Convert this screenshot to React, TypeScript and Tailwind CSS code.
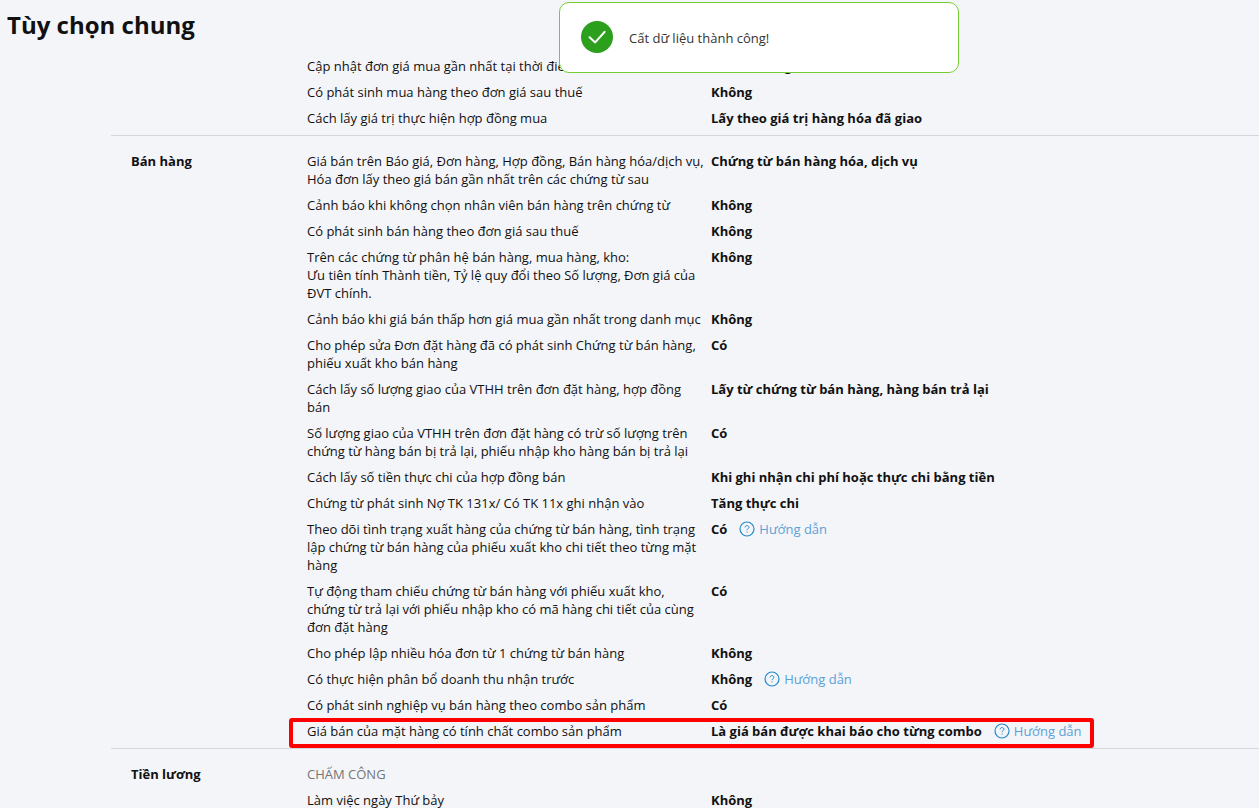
import type { ReactNode } from 'react';
import clsx from 'clsx';

interface Option {
  label: ReactNode;
  value: string;
  help?: boolean;
  highlighted?: boolean;
}

interface OptionSection {
  title?: string;
  subtitle?: string;
  options: Option[];
}

const sections: OptionSection[] = [
  {
    options: [
      { label: 'Cập nhật đơn giá mua gần nhất tại thời điểm', value: 'Thêm chứng từ' },
      { label: 'Có phát sinh mua hàng theo đơn giá sau thuế', value: 'Không' },
      { label: 'Cách lấy giá trị thực hiện hợp đồng mua', value: 'Lấy theo giá trị hàng hóa đã giao' },
    ],
  },
  {
    title: 'Bán hàng',
    options: [
      {
        label:
          'Giá bán trên Báo giá, Đơn hàng, Hợp đồng, Bán hàng hóa/dịch vụ, Hóa đơn lấy theo giá bán gần nhất trên các chứng từ sau',
        value: 'Chứng từ bán hàng hóa, dịch vụ',
      },
      { label: 'Cảnh báo khi không chọn nhân viên bán hàng trên chứng từ', value: 'Không' },
      { label: 'Có phát sinh bán hàng theo đơn giá sau thuế', value: 'Không' },
      {
        label: (
          <>
            Trên các chứng từ phân hệ bán hàng, mua hàng, kho:
            <br />
            Ưu tiên tính Thành tiền, Tỷ lệ quy đổi theo Số lượng, Đơn giá của ĐVT chính.
          </>
        ),
        value: 'Không',
      },
      { label: 'Cảnh báo khi giá bán thấp hơn giá mua gần nhất trong danh mục', value: 'Không' },
      {
        label: 'Cho phép sửa Đơn đặt hàng đã có phát sinh Chứng từ bán hàng, phiếu xuất kho bán hàng',
        value: 'Có',
      },
      {
        label: 'Cách lấy số lượng giao của VTHH trên đơn đặt hàng, hợp đồng bán',
        value: 'Lấy từ chứng từ bán hàng, hàng bán trả lại',
      },
      {
        label:
          'Số lượng giao của VTHH trên đơn đặt hàng có trừ số lượng trên chứng từ hàng bán bị trả lại, phiếu nhập kho hàng bán bị trả lại',
        value: 'Có',
      },
      {
        label: 'Cách lấy số tiền thực chi của hợp đồng bán',
        value: 'Khi ghi nhận chi phí hoặc thực chi bằng tiền',
      },
      { label: 'Chứng từ phát sinh Nợ TK 131x/ Có TK 11x ghi nhận vào', value: 'Tăng thực chi' },
      {
        label:
          'Theo dõi tình trạng xuất hàng của chứng từ bán hàng, tình trạng lập chứng từ bán hàng của phiếu xuất kho chi tiết theo từng mặt hàng',
        value: 'Có',
        help: true,
      },
      {
        label:
          'Tự động tham chiếu chứng từ bán hàng với phiếu xuất kho, chứng từ trả lại với phiếu nhập kho có mã hàng chi tiết của cùng đơn đặt hàng',
        value: 'Có',
      },
      { label: 'Cho phép lập nhiều hóa đơn từ 1 chứng từ bán hàng', value: 'Không' },
      { label: 'Có thực hiện phân bổ doanh thu nhận trước', value: 'Không', help: true },
      { label: 'Có phát sinh nghiệp vụ bán hàng theo combo sản phẩm', value: 'Có' },
      {
        label: 'Giá bán của mặt hàng có tính chất combo sản phẩm',
        value: 'Là giá bán được khai báo cho từng combo',
        help: true,
        highlighted: true,
      },
    ],
  },
  {
    title: 'Tiền lương',
    subtitle: 'CHẤM CÔNG',
    options: [{ label: 'Làm việc ngày Thứ bảy', value: 'Không' }],
  },
];

function HelpLink() {
  return (
    <a href="#huong-dan" className="flex items-center gap-1 text-[#5ba1d6]">
      <svg viewBox="0 0 16 16" className="size-4 text-[#2389cc]" fill="none" stroke="currentColor" aria-hidden="true">
        <circle cx="8" cy="8" r="7" strokeWidth="1.2" />
        <path d="M6.1 6.4c0-1.1.8-1.8 1.9-1.8s1.9.7 1.9 1.7c0 1.3-1.8 1.5-1.8 2.9" strokeWidth="1" />
        <path d="M8.1 10.4v1.1" strokeWidth="1.1" />
      </svg>
      Hướng dẫn
    </a>
  );
}

function OptionRow({ option }: { option: Option }) {
  return (
    <div className={clsx('flex gap-1.5', option.highlighted && 'relative w-fit')}>
      <dt className="w-[398px] shrink-0">{option.label}</dt>
      <dd className="flex items-start gap-3">
        <span className="font-bold">{option.value}</span>
        {option.help && <HelpLink />}
      </dd>
      {/* Highlight frame */}
      {option.highlighted && (
        <div className="pointer-events-none absolute -top-1 -right-3 -bottom-2 -left-[18px] rounded-[3px] border-4 border-[#ff0000]" />
      )}
    </div>
  );
}

function SuccessToast() {
  return (
    <div
      role="status"
      className="fixed top-[2px] right-[300px] flex w-[400px] items-start gap-4 rounded-[10px] border border-[#74cc34] bg-white px-[21px] pt-[18px] pb-[17px] text-[#333]"
    >
      <svg viewBox="0 0 32 32" className="size-8 shrink-0" aria-hidden="true">
        <circle cx="16" cy="16" r="16" fill="#2ca01c" />
        <path
          d="M8.6 16.2l5.6 5.2L23.6 10.8"
          fill="none"
          stroke="#fff"
          strokeWidth="2"
          strokeLinecap="round"
          strokeLinejoin="round"
        />
      </svg>
      <span className="py-2">Cất dữ liệu thành công!</span>
    </div>
  );
}

export default function App() {
  return (
    <div className="flex h-screen flex-col overflow-hidden bg-[#f4f5f9] font-['Open_Sans','Noto_Sans',sans-serif] text-[13px] leading-[18px] text-[#111]">
      <h1 className="h-[57px] shrink-0 px-[7px] py-2 text-2xl leading-[34px] font-bold">Tùy chọn chung</h1>

      <main className="min-h-0 flex-1 overflow-hidden pl-[111px]">
        {sections.map((section, index) => (
          <section
            key={index}
            className={clsx('flex pb-2 pl-5', index > 0 && 'border-t border-[#d4d7dc] pt-4')}
          >
            <h2 className="w-44 shrink-0 font-bold">{section.title}</h2>
            <div className="flex min-w-0 flex-1 flex-col gap-2">
              {section.subtitle && <h3 className="text-[#757575]">{section.subtitle}</h3>}
              <dl className="flex flex-col gap-2">
                {section.options.map((option, i) => (
                  <OptionRow key={i} option={option} />
                ))}
              </dl>
            </div>
          </section>
        ))}
      </main>

      <SuccessToast />
    </div>
  );
}
